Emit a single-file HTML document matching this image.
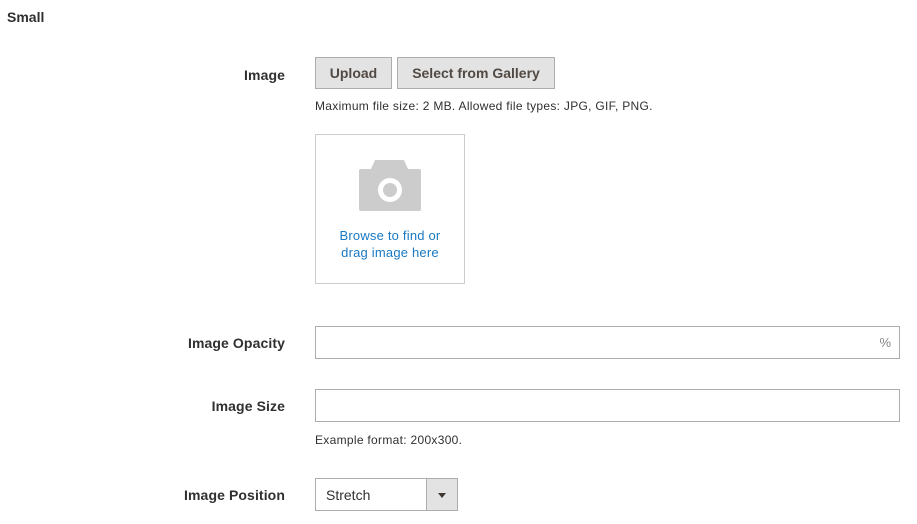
<!DOCTYPE html>
<html><head><style>
body{margin:0;width:917px;height:524px;background:#fff;font-family:"Liberation Sans",sans-serif;color:#303030;position:relative;overflow:hidden}
.a{position:absolute}
.lbl{position:absolute;right:632px;font-size:14px;font-weight:bold;color:#303030;text-align:right;letter-spacing:.1px}
.btn{position:absolute;top:57px;height:30px;background:#e3e3e3;border:1px solid #adadad;font-size:14px;font-weight:bold;color:#514943;text-align:center;line-height:30px}
.inp{position:absolute;left:315px;width:583px;height:31px;border:1px solid #adadad;background:#fff}
.note{position:absolute;left:315px;font-size:12px;color:#303030;letter-spacing:.3px}
</style></head><body>
<div class="a" style="left:7px;top:9px;font-size:14px;font-weight:bold">Small</div>
<div class="lbl" style="top:67px">Image</div>
<div class="btn" style="left:315px;width:75px">Upload</div>
<div class="btn" style="left:397px;width:156px">Select from Gallery</div>
<div class="note" style="top:99px">Maximum file size: 2 MB. Allowed file types: JPG, GIF, PNG.</div>
<div class="a" style="left:315px;top:134px;width:148px;height:148px;border:1px solid #ccc">
<svg class="a" style="left:43px;top:24px" width="62" height="52" viewBox="0 0 62 52"><path fill="#ccc" d="M16 1h29l4 9h11a2 2 0 0 1 2 2v38a2 2 0 0 1-2 2H2a2 2 0 0 1-2-2V12a2 2 0 0 1 2-2h10z"/><circle cx="31" cy="31" r="9.5" fill="none" stroke="#fff" stroke-width="5"/></svg>
<div class="a" style="left:0;width:148px;top:92px;text-align:center;font-size:13px;line-height:17px;color:#1979c3;letter-spacing:.2px">Browse to find or<br>drag image here</div>
</div>
<div class="lbl" style="top:335px">Image Opacity</div>
<div class="inp" style="top:326px"><span class="a" style="right:8px;top:8px;font-size:13px;color:#858585">%</span></div>
<div class="lbl" style="top:398px">Image Size</div>
<div class="inp" style="top:389px"></div>
<div class="note" style="top:433px">Example format: 200x300.</div>
<div class="lbl" style="top:487px">Image Position</div>
<div class="a" style="left:315px;top:478px;width:141px;height:31px;border:1px solid #adadad">
<span class="a" style="left:10px;top:8px;font-size:14px">Stretch</span>
<div class="a" style="left:110px;top:0;width:30px;height:31px;background:#e3e3e3;border-left:1px solid #adadad"></div>
<div class="a" style="left:122px;top:14px;width:0;height:0;border-left:4px solid transparent;border-right:4px solid transparent;border-top:5px solid #41362f"></div>
</div>
</body></html>
